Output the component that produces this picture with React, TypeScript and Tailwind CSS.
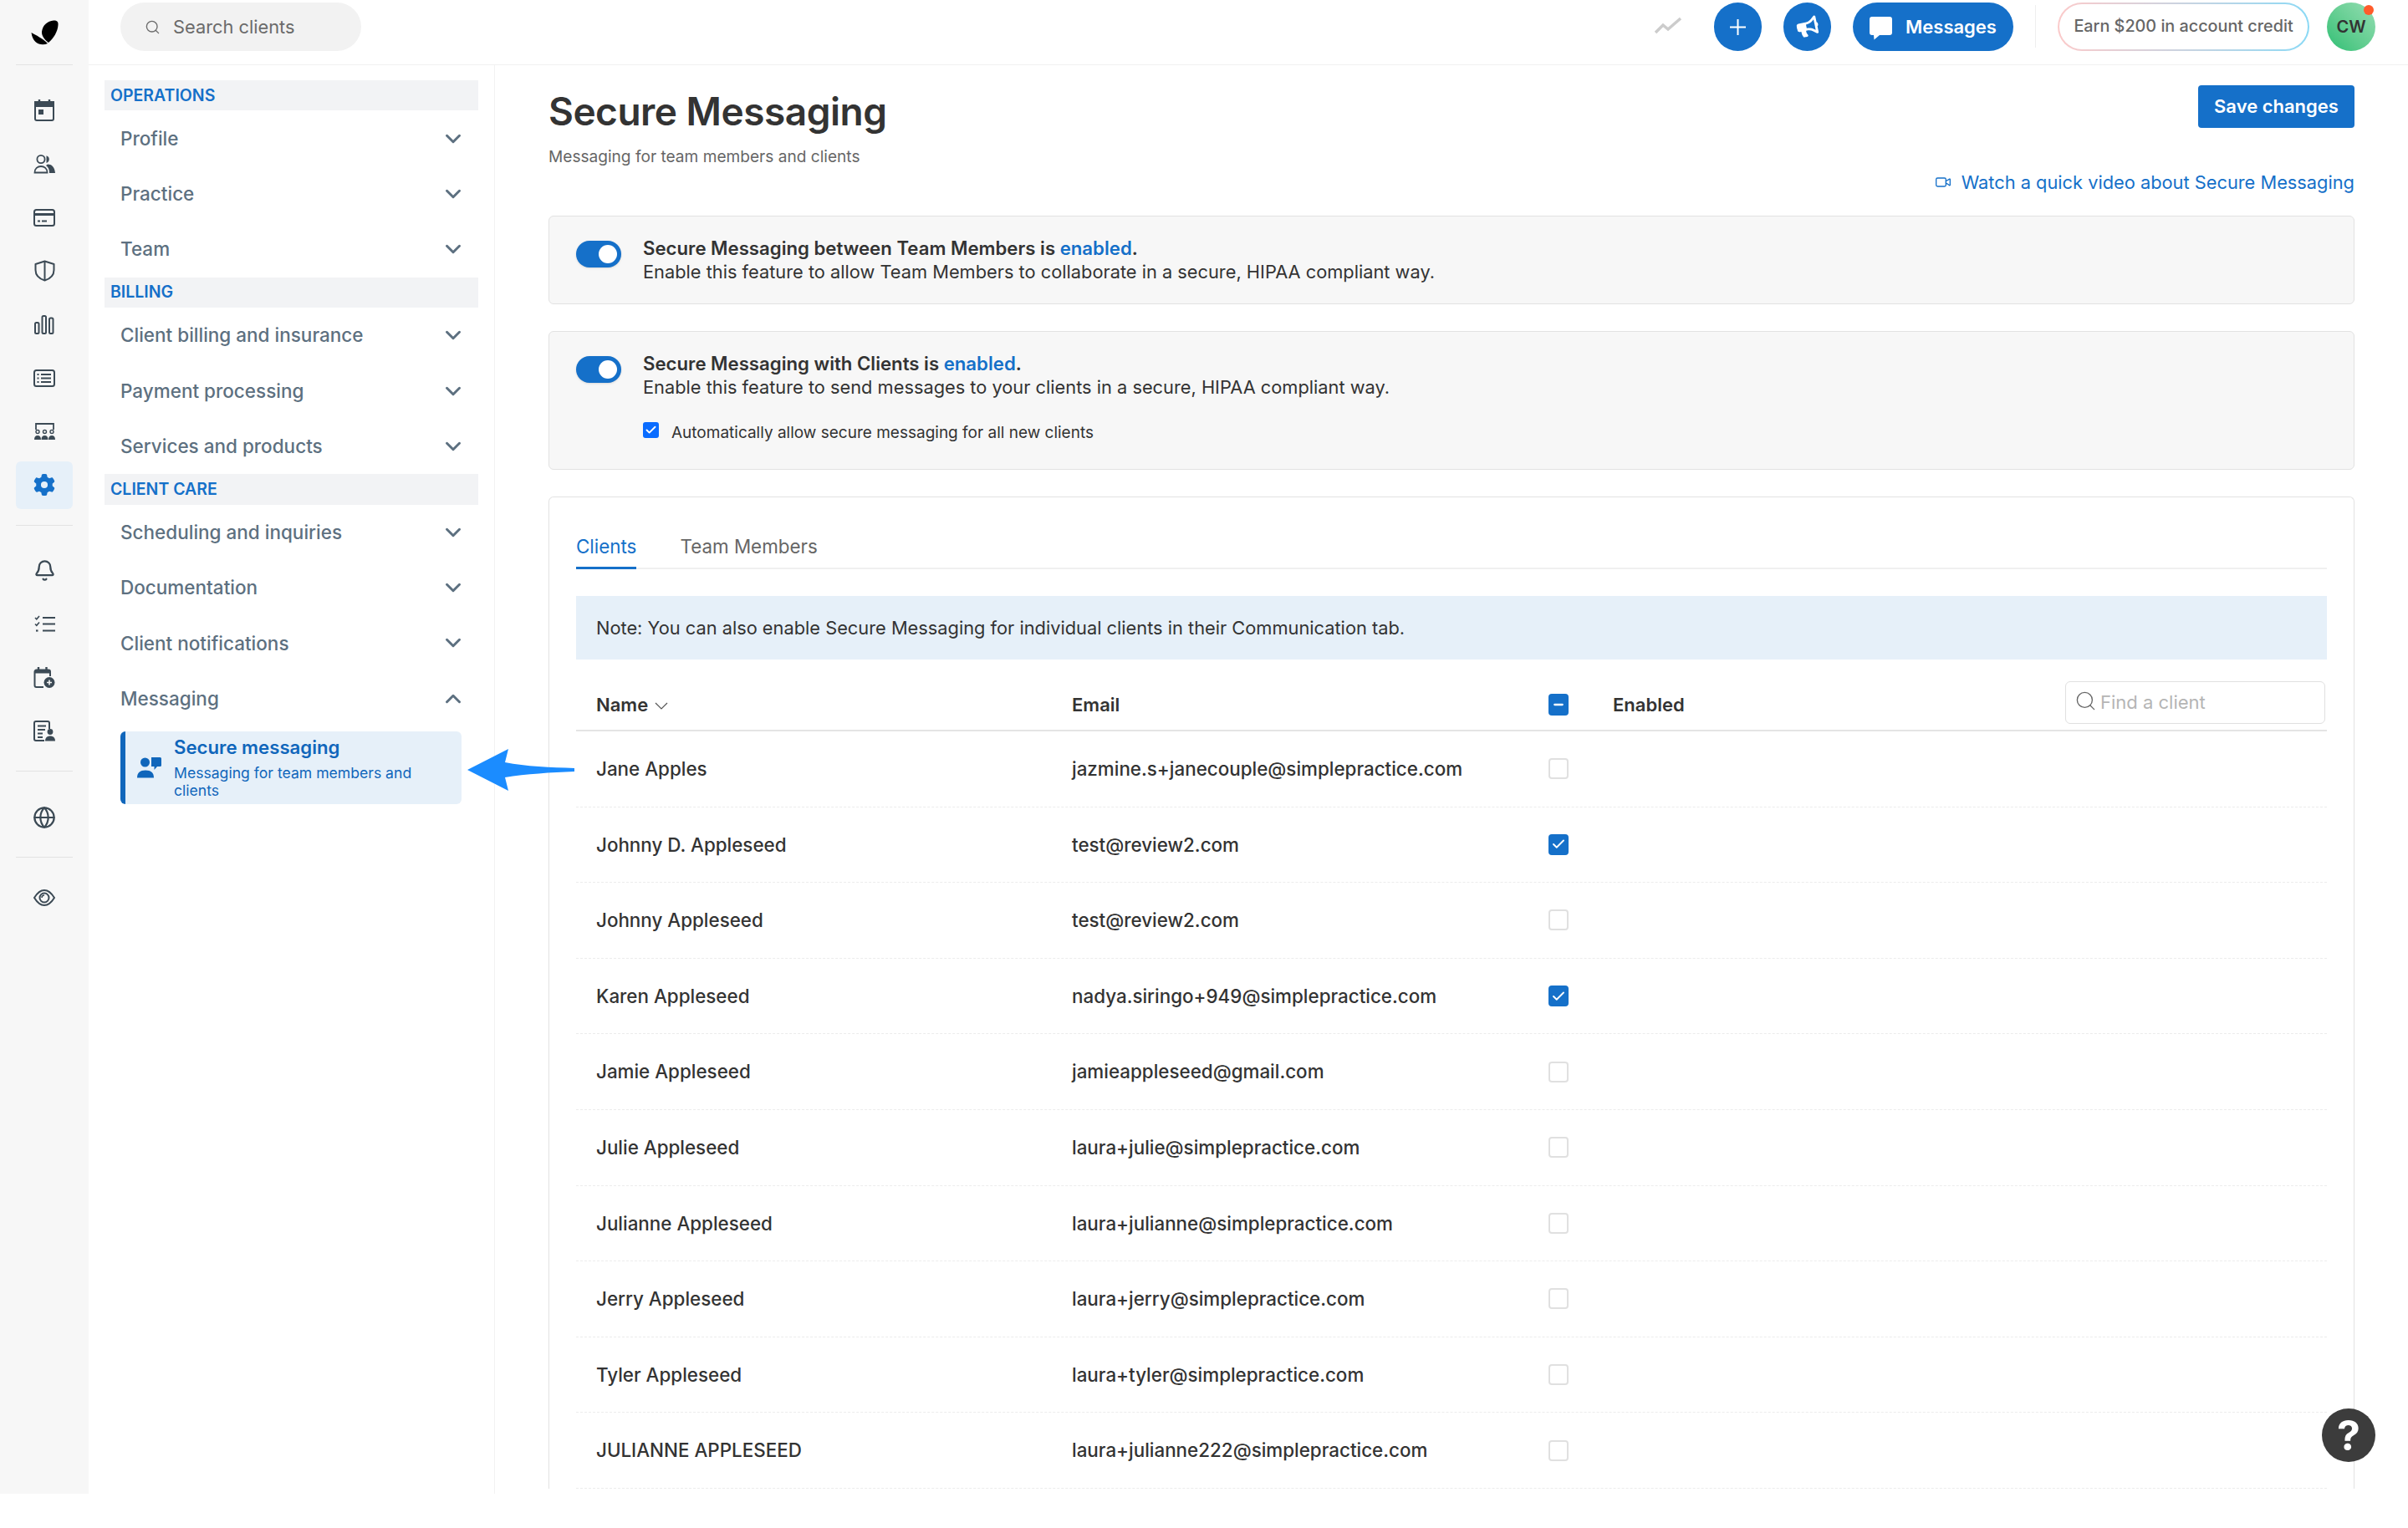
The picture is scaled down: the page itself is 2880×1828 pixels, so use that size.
import React from 'react';
import { Bell, Check, ChevronDown, ChevronUp, Globe, Minus, Search, Video } from 'lucide-react';
import { FaBullhorn } from 'react-icons/fa';
import { FaGear } from 'react-icons/fa6';

const railIcon = 'text-[#3c4a55]';

const CalendarIcon = () => (
  <svg width="26" height="28" viewBox="0 0 26 28" className={railIcon} fill="none" stroke="currentColor" strokeWidth="2">
    <rect x="2" y="4" width="22" height="22" rx="2" />
    <rect x="2" y="4" width="22" height="5" fill="currentColor" />
    <path d="M7 1v4M19 1v4" strokeWidth="2.4" />
    <rect x="6" y="13" width="6" height="6" fill="currentColor" stroke="none" />
  </svg>
);

const PeopleIcon = () => (
  <svg width="27" height="24" viewBox="0 0 27 24" className={railIcon} fill="none" stroke="currentColor" strokeWidth="1.8">
    <circle cx="9" cy="6.5" r="4.6" />
    <path d="M15.5 2.2a4.6 4.6 0 0 1 0 8.8z" fill="currentColor" stroke="none" />
    <path d="M1.5 22.5c0-5 3.5-7.5 7.5-7.5s7.5 2.5 7.5 7.5z" />
    <path d="M17 12.5c4.5 0 8.5 3 9 10.5h-7c0-4-1-7-4-9z" fill="currentColor" stroke="none" />
  </svg>
);

const CardIcon = () => (
  <svg width="26" height="21" viewBox="0 0 26 21" className={railIcon} fill="none" stroke="currentColor" strokeWidth="2">
    <rect x="1" y="1" width="24" height="19" rx="2.5" />
    <path d="M1 6.5h24" strokeWidth="3" />
    <path d="M5 14.5h3M10 14.5h6" />
  </svg>
);

const ShieldIcon = () => (
  <svg width="25" height="26" viewBox="0 0 25 26" className={railIcon} fill="none" stroke="currentColor" strokeWidth="2">
    <path d="M12.5 1.5 23.5 5v7c0 6-4.5 10.5-11 12.5C6 22.5 1.5 18 1.5 12V5z" strokeLinejoin="round" />
    <path d="M12.5 1.5v23" />
  </svg>
);

const BarsIcon = () => (
  <svg width="24" height="23" viewBox="0 0 24 23" className={railIcon} fill="none" stroke="currentColor" strokeWidth="2">
    <rect x="1" y="9" width="4.5" height="13" rx="1.5" />
    <rect x="9.5" y="1" width="4.5" height="21" rx="1.5" />
    <rect x="18" y="3.5" width="4.5" height="18.5" rx="1.5" />
  </svg>
);

const ListCardIcon = () => (
  <svg width="26" height="21" viewBox="0 0 26 21" className={railIcon} fill="none" stroke="currentColor" strokeWidth="2">
    <rect x="1" y="1" width="24" height="19" rx="2.5" />
    <path d="M9 6h12M9 10.5h12M9 15h12" strokeWidth="1.8" />
    <path d="M4.5 6h2M4.5 10.5h2M4.5 15h2" strokeWidth="2.2" />
  </svg>
);

const RoomIcon = () => (
  <svg width="27" height="22" viewBox="0 0 27 22" className={railIcon} fill="currentColor">
    <path d="M3 9V2h21v7" fill="none" stroke="currentColor" strokeWidth="1.8" />
    <circle cx="5" cy="11.5" r="2" fill="none" stroke="currentColor" strokeWidth="1.4" />
    <circle cx="13.5" cy="11.5" r="2" fill="none" stroke="currentColor" strokeWidth="1.4" />
    <circle cx="22" cy="11.5" r="2" fill="none" stroke="currentColor" strokeWidth="1.4" />
    <path d="M1 21c0-3.5 1.5-5 4-5s4 1.5 4 5zM9.5 21c0-3.5 1.5-5 4-5s4 1.5 4 5zM18 21c0-3.5 1.5-5 4-5s4 1.5 4 5z" />
  </svg>
);

const ChecklistIcon = () => (
  <svg width="25" height="21" viewBox="0 0 25 21" className={railIcon} fill="none" stroke="currentColor" strokeWidth="2.2">
    <path d="M1 3l1.8 1.8L6 1M1 10.5l1.8 1.8L6 8.5" strokeWidth="1.6" />
    <path d="M10 3h15M10 10.5h15M10 18.5h15" />
    <path d="M2 18.5h2.5" />
  </svg>
);

const CalendarPlusIcon = () => (
  <svg width="26" height="27" viewBox="0 0 26 27" className={railIcon} fill="none" stroke="currentColor" strokeWidth="2">
    <path d="M12 25H3.5A2 2 0 0 1 1.5 23V6.5a2 2 0 0 1 2-2H18a2 2 0 0 1 2 2V12" />
    <path d="M1.5 5H20v3.5H1.5z" fill="currentColor" stroke="none" />
    <path d="M6 1v4M15.5 1v4" strokeWidth="2.4" />
    <circle cx="19" cy="19.5" r="6.5" fill="currentColor" stroke="none" />
    <path d="M19 16.5v6M16 19.5h6" stroke="#f7f7f7" strokeWidth="1.6" />
  </svg>
);

const DocPersonIcon = () => (
  <svg width="26" height="25" viewBox="0 0 26 25" className={railIcon} fill="none" stroke="currentColor" strokeWidth="2">
    <path d="M13 24H3a2 2 0 0 1-2-2V3a2 2 0 0 1 2-2h14a2 2 0 0 1 2 2v7" />
    <path d="M5 6.5h10M5 11h9M5 15.5h6M5 20h6" strokeWidth="1.8" />
    <circle cx="20" cy="13.5" r="3.4" fill="currentColor" stroke="none" />
    <path d="M14 24.5c0-4 2.5-6 6-6s6 2 6 6z" fill="currentColor" stroke="none" />
  </svg>
);

const EyeIcon = () => (
  <svg width="26" height="20" viewBox="0 0 26 20" className={railIcon} fill="none" stroke="currentColor" strokeWidth="2">
    <path d="M1 10C5 3.5 9 1 13 1s8 2.5 12 9c-4 6.5-8 9-12 9S5 16.5 1 10z" strokeLinejoin="round" />
    <circle cx="13" cy="10" r="5.5" />
    <path d="M13 7a3 3 0 0 0-3 3" strokeWidth="1.5" />
  </svg>
);

const TrendIcon = () => (
  <svg width="33" height="21" viewBox="0 0 33 21" fill="none" stroke="#cccccc" strokeWidth="3.5">
    <path d="M1 19 10 10l6 5L31 2" />
  </svg>
);

const BubbleIcon = () => (
  <svg width="27" height="28" viewBox="0 0 27 28" fill="white">
    <path d="M3 0h21a3 3 0 0 1 3 3v16a3 3 0 0 1-3 3H12l-6.5 5.5L5 22H3a3 3 0 0 1-3-3V3a3 3 0 0 1 3-3z" />
  </svg>
);

const Slot = ({ children, active }: { children: React.ReactNode; active?: boolean }) => (
  <div className="flex h-16 w-full items-center justify-center">
    <div className={`flex h-[57px] w-full items-center justify-center rounded-[6px] ${active ? 'bg-[#e6f0f9]' : ''}`}>
      {children}
    </div>
  </div>
);

const Rail = () => (
  <aside className="flex w-[106px] shrink-0 flex-col bg-[#f7f7f7] px-[19px]">
    <div className="flex h-[77px] items-center justify-center">
      <svg width="45" height="56" viewBox="0 0 45 56" fill="black">
        <path d="M19 27C20 19 26 14 33 13.5 37 13.3 39 15 38.5 19 38 27 33 35 27 40 23 37 18.5 32 19 27z" />
        <path d="M6.5 28C12 31 20 35 26 41 19 44 8 42 6.5 28z" />
      </svg>
    </div>
    <div className="h-px bg-[#e3e3e3]" />
    <div className="mt-[22px] flex flex-col">
      <Slot><CalendarIcon /></Slot>
      <Slot><PeopleIcon /></Slot>
      <Slot><CardIcon /></Slot>
      <Slot><ShieldIcon /></Slot>
      <Slot><BarsIcon /></Slot>
      <Slot><ListCardIcon /></Slot>
      <Slot><RoomIcon /></Slot>
      <Slot active><FaGear className="text-[#1570c9]" size={26} /></Slot>
    </div>
    <div className="mt-4 h-px bg-[#e3e3e3]" />
    <div className="mt-[21px] flex flex-col">
      <Slot><Bell className={railIcon} size={27} strokeWidth={2} /></Slot>
      <Slot><ChecklistIcon /></Slot>
      <Slot><CalendarPlusIcon /></Slot>
      <Slot><DocPersonIcon /></Slot>
    </div>
    <div className="mt-4 h-px bg-[#e3e3e3]" />
    <div className="mt-[23px]">
      <Slot><Globe className={railIcon} size={28} strokeWidth={1.9} /></Slot>
    </div>
    <div className="mt-[15px] h-px bg-[#e3e3e3]" />
    <div className="mt-[16px]">
      <Slot><EyeIcon /></Slot>
    </div>
  </aside>
);

const TopBar = () => (
  <header className="flex h-[78px] shrink-0 items-start border-b border-[#f0f0f0] pt-[3px] pr-[39px] pl-[38px]">
    <div className="flex h-[58px] w-[288px] items-center rounded-full bg-[#f2f2f2] pl-[29px]">
      <Search className="text-[#6b6b6b]" size={19} strokeWidth={1.7} />
      <span className="ml-[15px] text-[21.8px] text-[#6b6b6b]">Search clients</span>
    </div>
    <div className="ml-auto flex items-start">
      <div className="mt-[17px] mr-[38px]"><TrendIcon /></div>
      <div className="flex h-[58px] w-[57px] items-center justify-center rounded-full bg-[#1570c9]">
        <svg width="19" height="19" viewBox="0 0 19 19" stroke="white" strokeWidth="2">
          <path d="M9.5 0v19M0 9.5h19" />
        </svg>
      </div>
      <div className="ml-[26px] flex h-[58px] w-[57px] items-center justify-center rounded-full bg-[#1570c9]">
        <FaBullhorn className="-rotate-12 text-white" size={26} />
      </div>
      <div className="ml-[26px] flex h-[58px] w-[192px] items-center rounded-full bg-[#1570c9] pl-[20px]">
        <div className="mt-[4px]"><BubbleIcon /></div>
        <span className="ml-[16px] text-[22px] font-semibold text-white">Messages</span>
      </div>
      <div className="mx-[26px] mt-[3px] h-[51px] w-px bg-[#eeeeee]" />
      <div className="h-[58px] w-[301px] rounded-full bg-linear-to-r from-[#fbcaca] to-[#8ad9f5] p-[2px]">
        <div className="flex h-full items-center justify-center rounded-full bg-white text-[19.8px] font-medium text-[#666666]">
          Earn $200 in account credit
        </div>
      </div>
      <div className="relative ml-[21px] flex h-[58px] w-[58px] items-center justify-center rounded-full bg-linear-to-tr from-[#27bf74] to-[#93deb3] text-[20px] font-semibold text-[#333333]">
        CW
        <span className="absolute top-[3px] right-[2px] h-[12px] w-[12px] rounded-full bg-[#ff5c2b]" />
      </div>
    </div>
  </header>
);

const NavItem = ({ label, open }: { label: string; open?: boolean }) => (
  <div className="flex h-[66.4px] items-center justify-between pr-[15px] pl-[19px]">
    <span className="text-[22.5px] font-medium text-[#5d7080]">{label}</span>
    {open ? (
      <ChevronUp className="text-[#5d7080]" size={30} strokeWidth={2.4} />
    ) : (
      <ChevronDown className="text-[#5d7080]" size={30} strokeWidth={2.4} />
    )}
  </div>
);

const SectionHead = ({ label }: { label: string }) => (
  <div className="flex h-[36.4px] items-center bg-[#f2f3f5] pl-[7px] text-[19.5px] font-semibold text-[#1570c9]">
    {label}
  </div>
);

const SettingsNav = () => (
  <nav className="w-[486px] shrink-0 border-r border-[#f2f2f2] pt-[18px] pr-[19px] pl-[19px]">
    <SectionHead label="OPERATIONS" />
    <NavItem label="Profile" />
    <NavItem label="Practice" />
    <NavItem label="Team" />
    <SectionHead label="BILLING" />
    <NavItem label="Client billing and insurance" />
    <NavItem label="Payment processing" />
    <NavItem label="Services and products" />
    <SectionHead label="CLIENT CARE" />
    <NavItem label="Scheduling and inquiries" />
    <NavItem label="Documentation" />
    <NavItem label="Client notifications" />
    <NavItem label="Messaging" open />
    <div className="mt-[6px] mr-[20px] ml-[19px] flex h-[87px] rounded-[6px] border-l-[6px] border-[#1066bb] bg-[#e6f0f9]">
      <div className="ml-[14px] flex w-[44px] shrink-0 items-center">
        <svg width="29" height="25" viewBox="0 0 29 25" fill="#1066bb">
          <circle cx="9.5" cy="6" r="5.5" />
          <path d="M0 24.5c0-6 3.5-9 10-9s10 3 10 9z" />
          <path d="M17 0h10.5a1.5 1.5 0 0 1 1.5 1.5v8a1.5 1.5 0 0 1-1.5 1.5H24l-3.5 4v-4H17z" />
        </svg>
      </div>
      <div className="flex w-[300px] flex-col pt-[6px]">
        <span className="text-[22.2px] leading-[26px] font-semibold text-[#1066bb]">Secure messaging</span>
        <span className="mt-[7px] text-[17.6px] leading-[21px] text-[#1066bb]">Messaging for team members and clients</span>
      </div>
    </div>
  </nav>
);

const Toggle = () => (
  <div className="flex h-8 w-[54px] shrink-0 items-center justify-end rounded-full bg-[#1570c9] pr-[5px] shadow-sm">
    <span className="h-[22px] w-[22px] rounded-full bg-white" />
  </div>
);

const RowCheck = ({ checked }: { checked?: boolean }) =>
  checked ? (
    <span className="flex h-[25px] w-[24px] items-center justify-center rounded-[4px] bg-[#1570c9]">
      <Check className="text-white" size={18} strokeWidth={2.5} />
    </span>
  ) : (
    <span className="block h-[25px] w-[24px] rounded-[4px] border-2 border-[#e0e0e0] bg-white" />
  );

const clients = [
  { name: 'Jane Apples', email: 'jazmine.s+janecouple@simplepractice.com' },
  { name: 'Johnny D. Appleseed', email: 'test@review2.com', on: true },
  { name: 'Johnny Appleseed', email: 'test@review2.com' },
  { name: 'Karen Appleseed', email: 'nadya.siringo+949@simplepractice.com', on: true },
  { name: 'Jamie Appleseed', email: 'jamieappleseed@gmail.com' },
  { name: 'Julie Appleseed', email: 'laura+julie@simplepractice.com' },
  { name: 'Julianne Appleseed', email: 'laura+julianne@simplepractice.com' },
  { name: 'Jerry Appleseed', email: 'laura+jerry@simplepractice.com' },
  { name: 'Tyler Appleseed', email: 'laura+tyler@simplepractice.com' },
  { name: 'JULIANNE APPLESEED', email: 'laura+julianne222@simplepractice.com' },
];

const Content = () => (
  <main className="min-w-0 flex-1 pr-[64px] pl-[64px] text-[#333333]">
    <div className="flex items-start justify-between">
      <div className="pt-[25px]">
        <h1 className="text-[46px] leading-[60px] font-semibold tracking-[-0.5px] text-[#333333]">Secure Messaging</h1>
        <p className="mt-[12px] text-[19.1px] leading-[24px] text-[#666666]">Messaging for team members and clients</p>
      </div>
      <button className="mt-[24px] h-[51px] w-[187px] rounded-[4px] bg-[#1570c9] text-[22px] font-semibold text-white">
        Save changes
      </button>
    </div>
    <div className="mt-[5px] flex h-[28px] items-center justify-end text-[21.8px] text-[#1570c9]">
      <Video size={20} strokeWidth={1.6} />
      <span className="ml-[12px]">Watch a quick video about Secure Messaging</span>
    </div>
    <section className="mt-[26px] flex h-[106px] rounded-[6px] border border-[#e2e2e2] bg-[#f7f7f7] pt-[29px] pl-[32px]">
      <Toggle />
      <div className="ml-[26px] -mt-[6px] text-[21.8px] leading-[29px]">
        <p className="text-[22.2px] font-semibold">
          Secure Messaging between Team Members is <span className="text-[#1570c9]">enabled</span>.
        </p>
        <p>Enable this feature to allow Team Members to collaborate in a secure, HIPAA compliant way.</p>
      </div>
    </section>
    <section className="mt-[32px] flex h-[166px] rounded-[6px] border border-[#e2e2e2] bg-[#f7f7f7] pt-[29px] pl-[32px]">
      <Toggle />
      <div className="ml-[26px] -mt-[6px] text-[21.8px] leading-[29px]">
        <p className="text-[22.2px] font-semibold">
          Secure Messaging with Clients is <span className="text-[#1570c9]">enabled</span>.
        </p>
        <p>Enable this feature to send messages to your clients in a secure, HIPAA compliant way.</p>
        <label className="mt-[27px] flex items-start">
          <span className="flex h-[19px] w-[19px] items-center justify-center rounded-[3px] bg-[#0a6cff]">
            <Check className="text-white" size={15} strokeWidth={3} />
          </span>
          <span className="ml-[15px] text-[19px] leading-[26px]">Automatically allow secure messaging for all new clients</span>
        </label>
      </div>
    </section>
    <section className="mt-[32px] rounded-t-[6px] border-x border-t border-[#e2e2e2] px-[32px] pt-[45px]">
      <div className="flex border-b-2 border-[#f0f0f0]">
        <div className="-mb-[2px] border-b-[3px] border-[#1570c9] pb-[10px] text-[22.4px] leading-[28px] text-[#1570c9]">Clients</div>
        <div className="ml-[52px] text-[22.4px] leading-[28px] text-[#666666]">Team Members</div>
      </div>
      <div className="mt-[32px] flex h-[76px] items-center bg-[#e6f0f9] pl-[24px] text-[21.8px]">
        Note: You can also enable Secure Messaging for individual clients in their Communication tab.
      </div>
      <div className="grid h-[86px] grid-cols-[569px_570px_77px_1fr] items-center border-b-2 border-[#e4e4e4] pt-[24px] pl-[24px] text-[22px] font-semibold">
        <div className="flex items-center">
          Name
          <svg className="mt-[3px] ml-[8px]" width="16" height="9" viewBox="0 0 16 9" fill="none" stroke="#555555" strokeWidth="1.2">
            <path d="M1 1l7 7 7-7" />
          </svg>
        </div>
        <div>Email</div>
        <span className="flex h-[26px] w-[24px] items-center justify-center rounded-[4px] bg-[#1570c9]">
          <Minus className="text-white" size={16} strokeWidth={3.5} />
        </span>
        <div className="flex items-center justify-between">
          Enabled
          <div className="relative -top-[3px] mr-[2px] flex h-[51px] w-[311px] items-center rounded-[6px] border border-[#e0e0e0] bg-white pl-[10px] text-[22px] font-normal text-[#b5b5b5]">
            <Search className="-mt-[4px] text-[#666666]" size={27} strokeWidth={1.2} />
            <span className="ml-[4px]">Find a client</span>
          </div>
        </div>
      </div>
      {clients.map(client => (
        <div
          key={client.email + client.name}
          className="grid h-[90.6px] grid-cols-[569px_570px_77px_1fr] items-center border-b border-dashed border-[#ececec] pl-[24px] text-[22.4px] font-medium"
        >
          <div>{client.name}</div>
          <div>{client.email}</div>
          <RowCheck checked={client.on} />
        </div>
      ))}
    </section>
  </main>
);

export default function App() {
  return (
    <div className="relative h-[1828px] w-[2880px] overflow-hidden bg-white font-['Inter',sans-serif]">
      <div className="flex h-[1787px] overflow-hidden">
        <Rail />
        <div className="flex min-w-0 flex-1 flex-col">
          <TopBar />
          <div className="flex min-h-0 flex-1 overflow-hidden">
            <SettingsNav />
            <Content />
          </div>
        </div>
      </div>
      {/* annotation arrow on top of the screenshot */}
      <svg className="absolute top-[896px] left-[559px]" width="128" height="50" viewBox="0 0 128 50" fill="#1b8cff">
        <path d="M0 25 49 0 45 16 C70 21 100 22 128 23 L128 27 C100 28 70 30 45 34 L49 50z" />
      </svg>
      <div className="absolute top-[1685px] left-[2777px] flex h-16 w-16 items-center justify-center rounded-full bg-[#3c3c3c] text-[50px] font-bold text-white">
        ?
      </div>
    </div>
  );
}
